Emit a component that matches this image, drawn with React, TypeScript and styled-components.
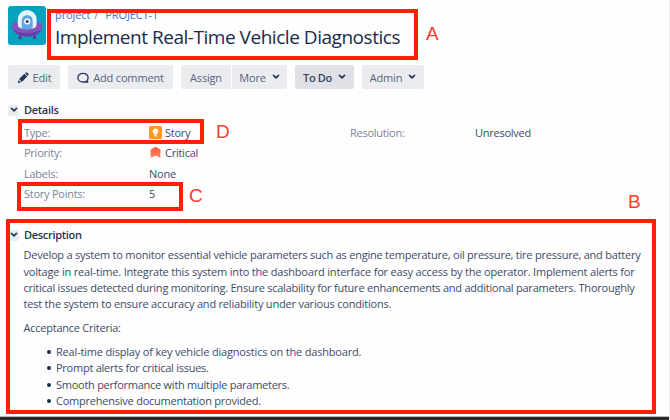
import React from 'react';
import styled, { createGlobalStyle, css } from 'styled-components';

const GlobalStyle = createGlobalStyle`
  * { box-sizing: border-box; }
  body {
    margin: 0;
    background: #fff;
    font-family: 'Open Sans', 'Noto Sans', sans-serif;
    font-size: 11px;
    color: #3d4b66;
    overflow: hidden;
  }
`;

const Page = styled.main`
  position: relative;
  width: 670px;
  height: 420px;
  display: flex;
  flex-direction: column;
  overflow: hidden;
  background: #fefefe;
  border-right: 1px solid #ececee;
`;

const Header = styled.header`
  display: flex;
  gap: 9px;
  height: 65px;
  padding: 6px 0 0 8px;
`;

const Avatar = styled.svg`
  display: block;
  flex: none;
  width: 38px;
  height: 39px;
`;

const Heading = styled.div`
  display: flex;
  flex-direction: column;
`;

const Breadcrumb = styled.nav`
  display: flex;
  height: 18px;
  line-height: 18px;
  letter-spacing: -0.1px;
  color: #3f6fd8;
`;

const Separator = styled.span`
  width: 15px;
  padding-left: 4px;
  color: #7a869a;
`;

const Title = styled.h1`
  margin: 0;
  font-size: 19px;
  line-height: 26px;
  font-weight: 400;
  letter-spacing: -0.466px;
  white-space: nowrap;
  color: #172b4d;
`;

const Toolbar = styled.div`
  display: flex;
  gap: 8px;
  height: 24px;
  padding-left: 8px;
`;

const ButtonGroup = styled.div`
  display: flex;
  gap: 1px;
`;

const Button = styled.button<{ $w: number; $active?: boolean; $gap?: number }>`
  display: flex;
  align-items: center;
  justify-content: center;
  gap: ${p => p.$gap ?? 4}px;
  width: ${p => p.$w}px;
  height: 24px;
  padding: 1px 0 0;
  border: 0;
  border-radius: 2px;
  background: ${p => (p.$active ? '#dfe1e6' : '#ebecf0')};
  color: ${p => (p.$active ? '#344563' : '#56637c')};
  font: ${p => (p.$active ? 600 : 400)} 11px/22px 'Open Sans', sans-serif;
  letter-spacing: ${p => (p.$active ? -0.35 : -0.17)}px;
  white-space: nowrap;
  svg { color: #253858; flex: none; }
  ${ButtonGroup} &:first-child { border-radius: 2px 0 0 2px; }
  ${ButtonGroup} &:last-child { border-radius: 0 2px 2px 0; }
`;

const Section = styled.section<{ $top: number }>`
  margin-top: ${p => p.$top}px;
  padding-left: 8px;
`;

const SectionTitle = styled.h2`
  display: flex;
  align-items: center;
  gap: 5px;
  height: 20px;
  margin: 0;
  font-size: 11px;
  line-height: 20px;
  font-weight: 600;
  letter-spacing: -0.3px;
  color: #24344f;
`;

const Toggle = styled.span`
  display: grid;
  place-items: center;
  width: 11px;
  height: 11px;
  border-radius: 2px;
  background: #ebecf0;
  color: #253858;
`;

const Fields = styled.dl`
  display: grid;
  grid-template-columns: 125px 201px 125px 1fr;
  grid-auto-rows: 20.3px;
  align-items: center;
  margin: 2.3px 0 0 16px;
  letter-spacing: -0.25px;
`;

const Label = styled.dt`
  color: #7a8599;
`;

const Value = styled.dd<{ $wide?: boolean }>`
  display: flex;
  align-items: center;
  gap: 3px;
  margin: 0;
  ${p => p.$wide && css`grid-column: 2 / -1;`}
`;

const Body = styled.div`
  display: flex;
  flex-direction: column;
  padding: 2.4px 0 0 15.5px;
  line-height: 16.3px;
`;

const Line = styled.span<{ $track: number }>`
  display: block;
  white-space: nowrap;
  letter-spacing: ${p => p.$track}px;
`;

const Paragraph = styled.p`
  margin: 0 0 7px;
`;

const Bullets = styled.ul`
  display: flex;
  flex-direction: column;
  margin: 0;
  padding: 1px 0 0 23px;
  list-style: none;
`;

const Bullet = styled.li`
  display: flex;
  align-items: center;
  gap: 5.5px;
  height: 16.35px;
  &::before {
    content: '';
    width: 4px;
    height: 4px;
    border-radius: 50%;
    background: #172b4d;
  }
`;

const BottomEdge = styled.footer`
  position: absolute;
  left: 0;
  bottom: 0;
  width: 670px;
  height: 4px;
  border-top: 1px solid #b9b9b9;
  background: #2a2829;
`;

/* Review annotations drawn over the issue page */
const Frame = styled.div<{ $x: number; $y: number; $w: number; $h: number }>`
  position: absolute;
  left: ${p => p.$x}px;
  top: ${p => p.$y}px;
  width: ${p => p.$w}px;
  height: ${p => p.$h}px;
  border: 4px solid #fe2004;
`;

const Marker = styled.span<{ $x: number; $y: number }>`
  position: absolute;
  left: ${p => p.$x}px;
  top: ${p => p.$y}px;
  font: 19px/20px 'Liberation Sans', Arial, sans-serif;
  color: #fb3b30;
`;

const Chevron = () => (
  <svg width="8" height="7" viewBox="0 0 8 7" fill="none" stroke="currentColor" strokeWidth="1.7" strokeLinecap="round" strokeLinejoin="round">
    <path d="M1.5 1.4 4 3.9 6.5 1.4" />
  </svg>
);

const Pencil = () => (
  <svg width="12" height="12" viewBox="0 0 12 12" fill="currentColor">
    <path d="M.8 11.2 1.7 8 4 10.3ZM2.1 7.1 7.4 1.8 10.2 4.6 4.9 9.9ZM8 1.2 8.9.5Q9.5 0 10.1.6L11.4 1.9Q12 2.5 11.5 3.1L10.8 4Z" />
  </svg>
);

const Comment = () => (
  <svg width="12" height="12" viewBox="0 0 12 12" fill="none" stroke="currentColor" strokeWidth="1.3" strokeLinejoin="round">
    <path d="M6 1.4C3.1 1.4.9 3.2.9 5.7S3.1 10 6 10H10.9L9.6 8.9C10.6 8.1 11.1 7 11.1 5.7 11.1 3.2 8.9 1.4 6 1.4Z" />
  </svg>
);

const StoryIcon = () => (
  <svg width="13" height="13" viewBox="0 0 13 13">
    <rect width="13" height="13" rx="1.5" fill="#ff991f" />
    <path d="M6.5 2.4a2.9 2.9 0 0 0-1.6 5.3V8.5h3.2V7.7A2.9 2.9 0 0 0 6.5 2.4ZM5.2 9.3h2.6v1.2H5.2Z" fill="#fff" />
  </svg>
);

const CriticalIcon = () => (
  <svg width="13" height="13" viewBox="0 0 13 13">
    <defs>
      <linearGradient id="critical" x1="0" y1="0" x2="0" y2="1">
        <stop offset="0" stopColor="#ff5a36" />
        <stop offset="1" stopColor="#ff8668" />
      </linearGradient>
    </defs>
    <path d="M6 1.1Q6.5.8 7 1.1L10.9 3.2Q11.4 3.5 11.4 3.9V11.2Q11.4 11.9 10.8 11.6L6.5 9.8 2.2 11.6Q1.6 11.9 1.6 11.2V3.9Q1.6 3.5 2.1 3.2Z" fill="url(#critical)" />
  </svg>
);

const ProjectAvatar = () => (
  <Avatar viewBox="0 0 38 39">
    <rect width="38" height="39" rx="3" fill="#07a2bd" />
    <path d="M11 29h2.4v4H11ZM25 29h2.4v4H25Z" fill="#5a3a9c" />
    <path d="M10 32.3h3.3M25 32.3H28.3" stroke="#5a3a9c" strokeWidth="1.4" />
    <path d="M4 20.5Q4 15.5 11 15.5H27.5Q34.5 15.5 34.5 20.5C34.5 26 27.5 30.5 19.2 30.5S4 26 4 20.5Z" fill="#8053bd" />
    <path d="M5 23.5Q19 31 33.6 23.5C31.5 28 26 30.5 19.2 30.5S7 28 5 23.5Z" fill="#6640aa" />
    <path d="M9.8 18.5V13.4A9.4 9.4 0 0 1 28.6 13.4V18.5Q28.6 23.2 19.2 23.2T9.8 18.5Z" fill="#e6f4fb" />
    <path d="M13.7 22.5V14.5A5.5 5.5 0 0 1 24.7 14.5V22.5Q19.2 24 13.7 22.5Z" fill="#62a9df" />
    <circle cx="19.2" cy="15.5" r="3" fill="#fff" />
    <circle cx="19.2" cy="15.5" r="1.5" fill="#1d3b6d" />
  </Avatar>
);

const summary: { text: string; track: number }[] = [
  { text: 'Develop a system to monitor essential vehicle parameters such as engine temperature, oil pressure, tire pressure, and battery', track: -0.226 },
  { text: 'voltage in real-time. Integrate this system into the dashboard interface for easy access by the operator. Implement alerts for', track: -0.184 },
  { text: 'critical issues detected during monitoring. Ensure scalability for future enhancements and additional parameters. Thoroughly', track: -0.237 },
  { text: 'test the system to ensure accuracy and reliability under various conditions.', track: -0.2 },
];

const criteria: { text: string; track: number }[] = [
  { text: 'Real-time display of key vehicle diagnostics on the dashboard.', track: -0.18 },
  { text: 'Prompt alerts for critical issues.', track: -0.25 },
  { text: 'Smooth performance with multiple parameters.', track: -0.26 },
  { text: 'Comprehensive documentation provided.', track: -0.23 },
];

const frames = [
  { x: 47, y: 9, w: 371, h: 51 },
  { x: 18, y: 119, w: 186, h: 25 },
  { x: 17, y: 182, w: 166, h: 29 },
  { x: 6, y: 219, w: 650, h: 195 },
];

const markers = [
  { name: 'A', x: 426, y: 24 },
  { name: 'B', x: 628, y: 192 },
  { name: 'C', x: 189, y: 186 },
  { name: 'D', x: 216, y: 122 },
];

export default function App() {
  return (
    <>
      <GlobalStyle />
      <Page>
        <Header>
          <ProjectAvatar />
          <Heading>
            <Breadcrumb>
              <span>project</span>
              <Separator>/</Separator>
              <span>PROJECT-1</span>
            </Breadcrumb>
            <Title>Implement Real-Time Vehicle Diagnostics</Title>
          </Heading>
        </Header>

        <Toolbar>
          <Button $w={52}><Pencil />Edit</Button>
          <Button $w={105}><Comment />Add comment</Button>
          <ButtonGroup>
            <Button $w={50}>Assign</Button>
            <Button $w={55} $gap={6}>More<Chevron /></Button>
          </ButtonGroup>
          <Button $w={59} $gap={6} $active>To Do<Chevron /></Button>
          <Button $w={62} $gap={6}>Admin<Chevron /></Button>
        </Toolbar>

        <Section $top={11}>
          <SectionTitle><Toggle><Chevron /></Toggle>Details</SectionTitle>
          <Fields>
            <Label>Type:</Label>
            <Value><StoryIcon />Story</Value>
            <Label>Resolution:</Label>
            <Value>Unresolved</Value>
            <Label>Priority:</Label>
            <Value $wide><CriticalIcon />Critical</Value>
            <Label>Labels:</Label>
            <Value $wide>None</Value>
            <Label>Story Points:</Label>
            <Value $wide>5</Value>
          </Fields>
        </Section>

        <Section $top={21.6}>
          <SectionTitle><Toggle><Chevron /></Toggle>Description</SectionTitle>
          <Body>
            <Paragraph>
              {summary.map(l => <Line key={l.text} $track={l.track}>{l.text}</Line>)}
            </Paragraph>
            <Paragraph><Line $track={-0.24}>Acceptance Criteria:</Line></Paragraph>
            <Bullets>
              {criteria.map(l => (
                <Bullet key={l.text}><Line $track={l.track}>{l.text}</Line></Bullet>
              ))}
            </Bullets>
          </Body>
        </Section>

        <BottomEdge />
        {frames.map(f => <Frame key={f.y} $x={f.x} $y={f.y} $w={f.w} $h={f.h} />)}
        {markers.map(m => <Marker key={m.name} $x={m.x} $y={m.y}>{m.name}</Marker>)}
      </Page>
    </>
  );
}
